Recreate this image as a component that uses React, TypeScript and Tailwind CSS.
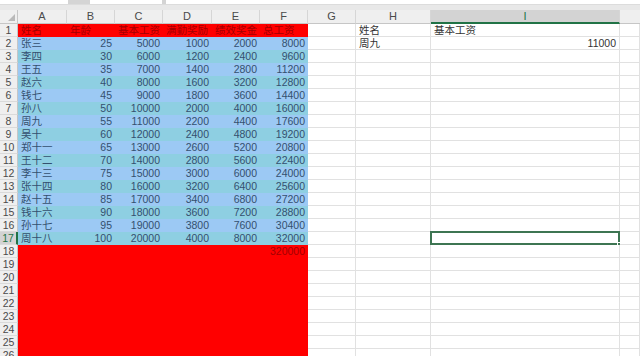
import React from 'react';

const names = ['张三', '李四', '王五', '赵六', '钱七', '孙八', '周九', '吴十', '郑十一', '王十二', '李十三', '张十四', '赵十五', '钱十六', '孙十七', '周十八'];
const cols = ['A', 'B', 'C', 'D', 'E', 'F', 'G', 'H', 'I'];
const titles = ['姓名', '年龄', '基本工资', '满勤奖励', '绩效奖金', '总工资'];

const font = { fontFamily: '"Liberation Sans", "Noto Sans CJK SC", sans-serif' };

function RowHead({ n, active }: { n: number; active?: boolean }) {
  return (
    <div
      className={
        'h-[13px] flex items-center justify-center text-[10.5px] leading-none border-b border-[#dadada] ' +
        (active ? 'bg-[#d3d3d3] text-[#217346] border-r-2 border-r-[#217346]' : 'bg-[#efefef] text-[#4a4a4a] border-r border-r-[#c6c6c6]')
      }
    >
      {n}
    </div>
  );
}

function Blank({ children, right, active }: { children?: React.ReactNode; right?: boolean; active?: boolean }) {
  return (
    <div
      className={
        'relative h-[13px] flex items-center px-[3px] text-[10.5px] leading-none text-[#333] border-r border-b border-[#e1e1e1] ' +
        (right ? 'justify-end' : '')
      }
    >
      {children}
      {active && (
        <div className="absolute -top-px -left-px -right-px -bottom-px border-2 border-[#3d7552]">
          <div className="absolute -right-[3px] -bottom-[3px] w-[4px] h-[4px] bg-[#3d7552] border border-white" />
        </div>
      )}
    </div>
  );
}

function Filled({ bg, children, right, text }: { bg: string; children?: React.ReactNode; right?: boolean; text: string }) {
  return (
    <div className={'h-[13px] flex items-center px-[3px] text-[10.5px] leading-none ' + bg + ' ' + text + ' ' + (right ? 'justify-end' : '')}>
      {children}
    </div>
  );
}

export default function App() {
  const rows: React.ReactNode[] = [];

  // row 1
  rows.push(<RowHead key="h1" n={1} />);
  titles.forEach(t =>
    rows.push(
      <Filled key={'t' + t} bg="bg-[#ff0000]" text="text-[#a30000]">
        {t}
      </Filled>
    )
  );
  rows.push(<Blank key="g1" />);
  rows.push(<Blank key="h1c">姓名</Blank>);
  rows.push(<Blank key="i1c">基本工资</Blank>);
  rows.push(<Blank key="j1" />);

  // rows 2-17
  names.forEach((name, i) => {
    const r = i + 2;
    const bg = r % 2 === 0 ? 'bg-[#9cc9f4]' : 'bg-[#8ecfe2]';
    const txt = 'text-[#34506f]';
    const vals = [25 + i * 5, 5000 + i * 1000, 1000 + i * 200, 2000 + i * 400, 8000 + i * 1600];
    rows.push(<RowHead key={'h' + r} n={r} active={r === 17} />);
    rows.push(
      <Filled key={'n' + r} bg={bg} text={txt}>
        {name}
      </Filled>
    );
    vals.forEach((v, j) =>
      rows.push(
        <Filled key={'v' + r + j} bg={bg} text={txt} right>
          {v}
        </Filled>
      )
    );
    rows.push(<Blank key={'g' + r} />);
    rows.push(<Blank key={'hh' + r}>{r === 2 ? '周九' : null}</Blank>);
    rows.push(
      <Blank key={'ii' + r} right active={r === 17}>
        {r === 2 ? '11000' : null}
      </Blank>
    );
    rows.push(<Blank key={'j' + r} />);
  });

  // rows 18-26
  for (let r = 18; r <= 26; r++) {
    rows.push(<RowHead key={'h' + r} n={r} />);
    for (let c = 0; c < 6; c++) {
      rows.push(
        <Filled key={'red' + r + c} bg="bg-[#ff0000]" text="text-[#a30000]" right>
          {r === 18 && c === 5 ? '320000' : null}
        </Filled>
      );
    }
    rows.push(<Blank key={'g' + r} />);
    rows.push(<Blank key={'hh' + r} />);
    rows.push(<Blank key={'ii' + r} />);
    rows.push(<Blank key={'j' + r} />);
  }

  return (
    <div className="w-[640px] h-[356px] overflow-hidden bg-white" style={font}>
      {/* formula bar remnants */}
      <div className="h-[4px] flex bg-[#d4d4d4]">
        <div className="w-[68px] bg-white" />
        <div className="w-[22px]" />
        <div className="w-[72px] bg-white" />
        <div className="w-[4px]" />
        <div className="flex-1 bg-white" />
      </div>
      <div className="h-[6px] bg-[#e8e8e8] border-t border-[#dcdcdc]" />
      <div className="grid grid-cols-[18px_49px_48px_48px_49px_48px_48px_48px_75px_189px_20px]">
        {/* column headers */}
        <div className="h-[14px] bg-[#efefef] border-r border-b border-[#c6c6c6] relative">
          <div className="absolute right-[2px] bottom-[2px] w-0 h-0 border-l-[7px] border-l-transparent border-b-[7px] border-b-[#b9b9b9]" />
        </div>
        {cols.map(c => (
          <div
            key={c}
            className={
              'h-[14px] flex items-center justify-center text-[11px] leading-none border-r border-[#d6d6d6] ' +
              (c === 'I' ? 'bg-[#d3d3d3] text-[#217346] border-b-2 border-b-[#217346]' : 'bg-[#efefef] text-[#4a4a4a] border-b border-b-[#c6c6c6]')
            }
          >
            {c}
          </div>
        ))}
        <div className="h-[14px] bg-[#efefef] border-b border-[#c6c6c6]" />
        {rows}
      </div>
    </div>
  );
}
